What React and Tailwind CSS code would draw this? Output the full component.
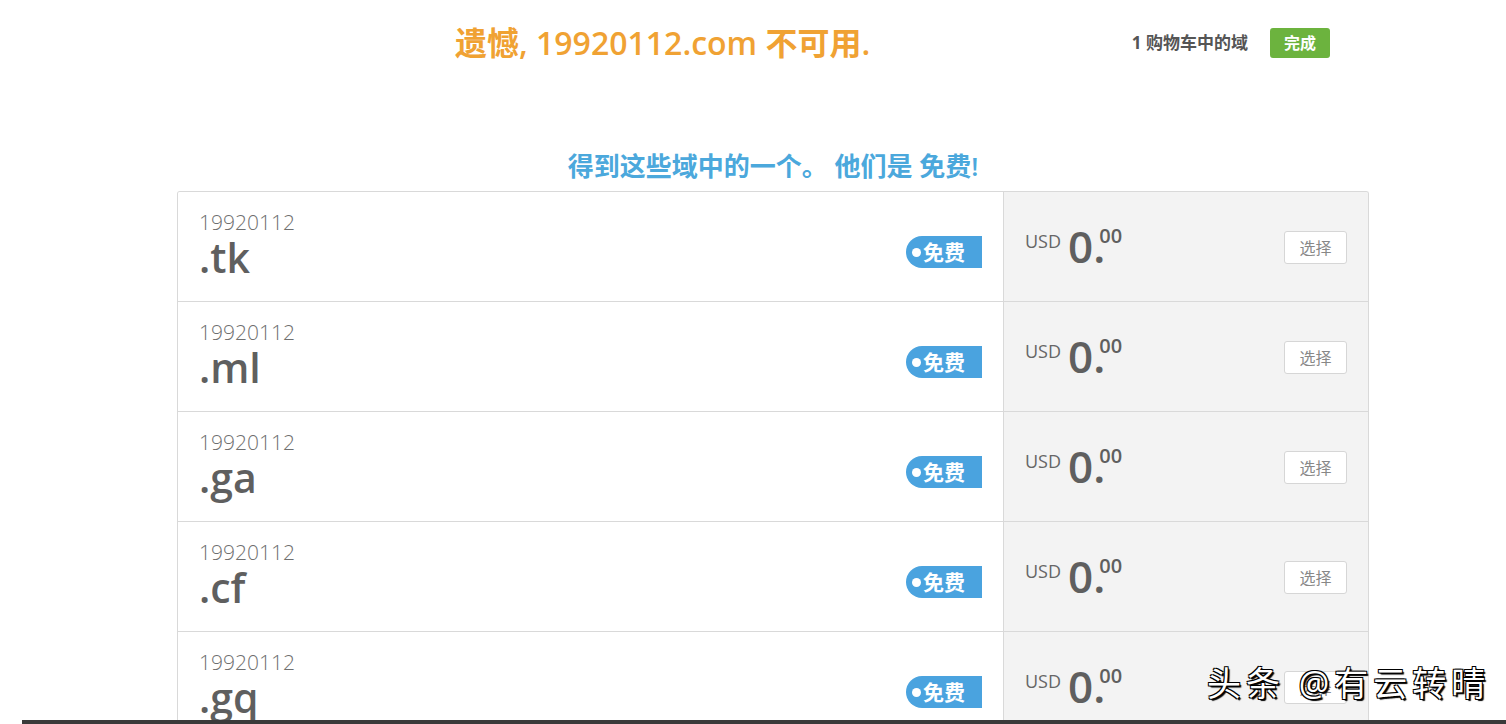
import React from 'react';

const font = { fontFamily: '"Open Sans", "Noto Sans CJK SC", sans-serif' };

const tlds = ['.tk', '.ml', '.ga', '.cf', '.gq'];

function Row({ tld }) {
  return (
    <div className="flex h-[110px] border-b border-[#d9d9d9]">
      {/* domain cell */}
      <div className="flex w-[826px] justify-between border-r border-[#d9d9d9] bg-white px-[21px]">
        <div className="pt-[16px]">
          <div className="text-[21px] font-light leading-[28px] text-[#6f6f6f]">19920112</div>
          <div className="-mt-[2px] text-[41px] font-semibold leading-[46px] text-[#5f5f5f]">{tld}</div>
        </div>
        <div className="pt-[44px]">
          <div className="flex h-[32px] w-[76px] items-center rounded-l-full rounded-r-[3px] bg-[#4aa3df] pl-[6px]">
            <span className="h-[9px] w-[9px] rounded-full bg-white" />
            <span className="ml-[2px] text-[21px] font-bold leading-none text-white">免费</span>
          </div>
        </div>
      </div>
      {/* price cell */}
      <div className="flex flex-1 justify-between bg-[#f3f3f3] pl-[21px] pr-[21px]">
        <div className="flex items-start pt-[34px] text-[#666]">
          <span className="mt-[6px] text-[18px] leading-none">USD</span>
          <span className="ml-[7px] text-[44px] font-semibold leading-[40px] text-[#5f5f5f]">0.</span>
          <span className="-ml-[6px] text-[20px] font-semibold leading-none text-[#5f5f5f]">00</span>
        </div>
        <div className="pt-[39px]">
          <button className="h-[33px] w-[63px] rounded-[3px] border border-[#d6d6d6] bg-white text-[16px] text-[#888]">
            选择
          </button>
        </div>
      </div>
    </div>
  );
}

export default function App() {
  return (
    <div className="relative h-[724px] w-full overflow-hidden bg-white" style={font}>
      {/* header */}
      <div className="flex h-[85px] items-center">
        <h1 className="ml-[455px] text-[32px] font-semibold leading-none text-[#f0a233]">
          遗憾, 19920112.com 不可用.
        </h1>
        <div className="ml-auto mr-[176px] flex items-center">
          <span className="text-[17px] font-bold text-[#555]">1 购物车中的域</span>
          <button className="ml-[22px] h-[30px] w-[60px] rounded-[3px] bg-[#6cb33e] text-[16px] font-bold text-white">
            完成
          </button>
        </div>
      </div>

      <div className="ml-[177px] w-[1192px]">
        <h2 className="mt-[65px] mb-[8px] text-center text-[26px] font-semibold leading-[33px] text-[#4ba8dc]">
          得到这些域中的一个。 他们是 免费!
        </h2>
        <div className="overflow-hidden rounded-t-[3px] border-l border-r border-t border-[#d9d9d9]">
          {tlds.map((t) => (
            <Row key={t} tld={t} />
          ))}
        </div>
      </div>

      {/* bottom bar */}
      <div className="absolute bottom-0 left-[22px] right-0 h-[4px] bg-[#3a3a3a]" />

      {/* watermark */}
      <div
        className="absolute left-[1207px] top-[662px] text-[34px] leading-[42px] tracking-[5px] text-white"
        style={{ textShadow: '1px 1px 0 #000, -1px -1px 0 #000, 1px -1px 0 #000, -1px 1px 0 #000, 2px 2px 1px #000' }}
      >
        头条 @有云转晴
      </div>
    </div>
  );
}
